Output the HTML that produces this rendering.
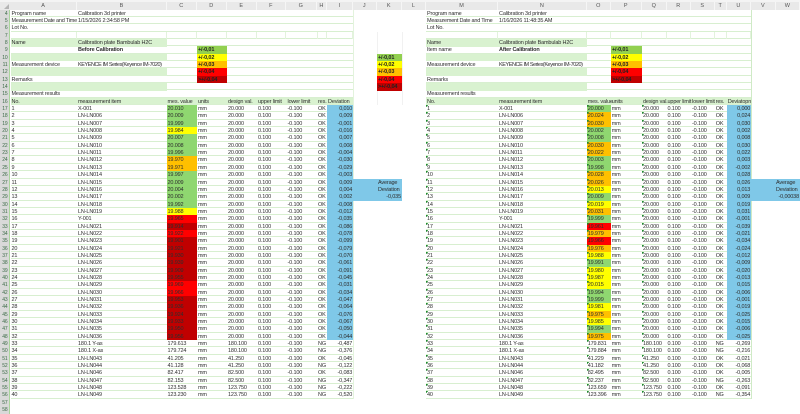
<!DOCTYPE html>
<html><head><meta charset="utf-8"><style>
html,body{margin:0;padding:0;background:#fff}
#p{position:relative;width:800px;height:414px;overflow:hidden;background:#fff;font:5.5px/9.4px "Liberation Sans",sans-serif;letter-spacing:-.15px;color:#2e2e2e}
#top{position:absolute;left:0;top:0;width:800px;height:9.6px;background:#e9e9e9;border-top:2px solid #f4f4f4;box-sizing:border-box}
#top b{position:absolute;top:0;height:7.6px;font-weight:normal;text-align:center;border-right:1px solid #f6f6f6;box-sizing:border-box;line-height:8px;color:#555}
#tri{position:absolute;left:4px;top:4px;width:0;height:0;border-left:5px solid transparent;border-bottom:5px solid #b5b5b5}
#n{position:absolute;left:0;top:9.6px;width:10px;height:404.4px;background:#d9d9d9;border-right:1px solid #a9d49c;box-sizing:border-box}
#n div{height:7.352px;text-align:right;padding-right:1.5px;color:#3d6b48;font-size:5px}
.t{position:absolute;top:9.6px}
.L{left:10.5px;width:342.5px;border-right:1px solid #e3f3dd;height:389.7px}
.R{left:426px;width:325px;border-right:1px solid #cfeac6;height:389.7px;box-sizing:content-box}
.r{position:relative;height:7.352px;border-bottom:1px solid #d8efd0;box-sizing:border-box}
.r i{position:absolute;top:0;height:7.6px;font-style:normal;white-space:nowrap;padding-left:1px;box-sizing:border-box}
.s i{background:#d9f2d0}
.h{background:#d9f2d0}
.v i{border-right:1px solid #e3f3dd}
.L .r i:nth-child(1){left:0;width:66.5px}
.L .r i:nth-child(2){left:66.5px;width:89.5px}
.L .r i:nth-child(3){left:156px;width:30px}
.L .r i:nth-child(4){left:186.5px;width:30px}
.L .r i:nth-child(5){left:216.5px;width:30px}
.L .r i:nth-child(6){left:246.5px;width:29px}
.L .r i:nth-child(7){left:276px;width:31px}
.L .r i:nth-child(8){left:306.5px;width:10px}
.L .r i:nth-child(9){left:316.5px;width:26px}
.R .r i:nth-child(1){left:0;width:72px}
.R .r i:nth-child(2){left:72px;width:88.7px}
.R .r i:nth-child(3){left:160.7px;width:24px}
.R .r i:nth-child(4){left:184.7px;width:31px}
.R .r i:nth-child(5){left:216px;width:24.7px}
.R .r i:nth-child(6){left:240.5px;width:24.5px}
.R .r i:nth-child(7){left:265px;width:24px}
.R .r i:nth-child(8){left:288.7px;width:12px}
.R .r i:nth-child(9){left:300.7px;width:24.3px}
.d .r i:nth-child(9){text-align:right;padding:0 .8px 0 0}
.d .r.h i:nth-child(9){text-align:left;padding-left:1px}
.R.d .r:nth-child(n+14) i:nth-child(1),.R.d .r:nth-child(n+14) i:nth-child(3),.R.d .r:nth-child(n+14) i:nth-child(5){background-image:linear-gradient(135deg,#1f8a2e 1.6px,transparent 1.7px)}
.r i.G{background-color:#8fd770}
.r i.Y{background-color:#ffff00}
.r i.O{background-color:#ffc000}
.r i.X{background-color:#ff0000}
.r i.D{background-color:#c00000}
.r i.B{background-color:#7fc8e8}
.r i.m{letter-spacing:-.22px}
.r i.k{letter-spacing:-.42px}
.lg{position:absolute;height:7.5px;font-weight:bold;padding-left:1px;box-sizing:border-box;color:#222;white-space:nowrap}
.av{position:absolute;background:#7fc8e8;height:22.1px;top:178.7px}
.av span{position:absolute;white-space:nowrap}
.fl{position:absolute;top:31.7px;height:73px;width:1px;background:#f1f1f1}
</style></head><body><div id="p">
<div id="top">
<b style="left:10px;width:67px">A</b><b style="left:77px;width:89.7px">B</b><b style="left:166.7px;width:30px">C</b><b style="left:196.7px;width:30px">D</b><b style="left:226.7px;width:30px">E</b><b style="left:256.7px;width:29px">F</b><b style="left:285.7px;width:31px">G</b><b style="left:316.7px;width:10.3px">H</b><b style="left:327px;width:25.7px">I</b><b style="left:352.7px;width:24px">J</b><b style="left:376.7px;width:25px">K</b><b style="left:401.7px;width:24.3px">L</b><b style="left:426px;width:72px">M</b><b style="left:498px;width:88.7px">N</b><b style="left:586.7px;width:24px">O</b><b style="left:610.7px;width:31px">P</b><b style="left:641.7px;width:25px">Q</b><b style="left:666.7px;width:24px">R</b><b style="left:690.7px;width:24px">S</b><b style="left:714.5px;width:12.2px">T</b><b style="left:726.7px;width:24.3px">U</b><b style="left:751px;width:24.5px">V</b><b style="left:775.5px;width:24.5px">W</b>
</div><div id="tri"></div>
<div id="n"><div>4</div><div>5</div><div>6</div><div>7</div><div>8</div><div>9</div><div>10</div><div>11</div><div>12</div><div>13</div><div>14</div><div>15</div><div>16</div><div>17</div><div>18</div><div>19</div><div>20</div><div>21</div><div>22</div><div>23</div><div>24</div><div>25</div><div>26</div><div>27</div><div>28</div><div>29</div><div>30</div><div>31</div><div>32</div><div>33</div><div>34</div><div>35</div><div>36</div><div>37</div><div>38</div><div>39</div><div>40</div><div>41</div><div>42</div><div>43</div><div>44</div><div>45</div><div>46</div><div>47</div><div>48</div><div>49</div><div>50</div><div>51</div><div>52</div><div>53</div><div>54</div><div>55</div><div>56</div><div>57</div><div>58</div></div>
<div class="fl" style="left:353px"></div><div class="fl" style="left:377px"></div><div class="fl" style="left:402px"></div>

<div class="t L d">
<div class="r"><i>Program name</i><i>Calibration 3d printer</i></div>
<div class="r"><i class="m">Measurement Date and Time</i><i>1/15/2026 2:34:58 PM</i></div>
<div class="r"><i>Lot No.</i></div>
<div class="r v"><i></i><i></i><i></i><i></i><i></i><i></i><i></i><i></i><i></i></div>
<div class="r s"><i>Name</i><i>Calibration plate Bambulab H2C</i></div>
<div class="r"><i></i><i><b>Before Calibration</b></i></div>
<div class="r s"><i></i><i></i></div>
<div class="r"><i>Measurement device</i><i class="k">KEYENCE IM Series(Keyence IM-7020)</i></div>
<div class="r s"><i></i><i></i></div>
<div class="r"><i>Remarks</i></div>
<div class="r s"><i></i><i></i></div>
<div class="r"><i>Measurement results</i></div>
<div class="r h"><i>No.</i><i>measurement item</i><i>mes. value</i><i>units</i><i>design val.</i><i>upper limit</i><i>lower limit</i><i>res.</i><i>Deviation</i></div>
<div class="r"><i>1</i><i>X-001</i><i class="G">20.010</i><i>mm</i><i>20.000</i><i>0.100</i><i>-0.100</i><i>OK</i><i class="B">0,010</i></div>
<div class="r"><i>2</i><i>LN-LN006</i><i class="G">20.009</i><i>mm</i><i>20.000</i><i>0.100</i><i>-0.100</i><i>OK</i><i class="B">0,009</i></div>
<div class="r"><i>3</i><i>LN-LN007</i><i class="G">19.999</i><i>mm</i><i>20.000</i><i>0.100</i><i>-0.100</i><i>OK</i><i class="B">-0,001</i></div>
<div class="r"><i>4</i><i>LN-LN008</i><i class="Y">19.984</i><i>mm</i><i>20.000</i><i>0.100</i><i>-0.100</i><i>OK</i><i class="B">-0,016</i></div>
<div class="r"><i>5</i><i>LN-LN009</i><i class="G">20.007</i><i>mm</i><i>20.000</i><i>0.100</i><i>-0.100</i><i>OK</i><i class="B">0,007</i></div>
<div class="r"><i>6</i><i>LN-LN010</i><i class="G">20.008</i><i>mm</i><i>20.000</i><i>0.100</i><i>-0.100</i><i>OK</i><i class="B">0,008</i></div>
<div class="r"><i>7</i><i>LN-LN011</i><i class="G">19.996</i><i>mm</i><i>20.000</i><i>0.100</i><i>-0.100</i><i>OK</i><i class="B">-0,004</i></div>
<div class="r"><i>8</i><i>LN-LN012</i><i class="O">19.970</i><i>mm</i><i>20.000</i><i>0.100</i><i>-0.100</i><i>OK</i><i class="B">-0,030</i></div>
<div class="r"><i>9</i><i>LN-LN013</i><i class="O">19.971</i><i>mm</i><i>20.000</i><i>0.100</i><i>-0.100</i><i>OK</i><i class="B">-0,029</i></div>
<div class="r"><i>10</i><i>LN-LN014</i><i class="G">19.997</i><i>mm</i><i>20.000</i><i>0.100</i><i>-0.100</i><i>OK</i><i class="B">-0,003</i></div>
<div class="r"><i>11</i><i>LN-LN015</i><i class="G">20.009</i><i>mm</i><i>20.000</i><i>0.100</i><i>-0.100</i><i>OK</i><i class="B">0,009</i></div>
<div class="r"><i>12</i><i>LN-LN016</i><i class="G">20.004</i><i>mm</i><i>20.000</i><i>0.100</i><i>-0.100</i><i>OK</i><i class="B">0,004</i></div>
<div class="r"><i>13</i><i>LN-LN017</i><i class="G">20.002</i><i>mm</i><i>20.000</i><i>0.100</i><i>-0.100</i><i>OK</i><i class="B">0,002</i></div>
<div class="r"><i>14</i><i>LN-LN018</i><i class="G">19.992</i><i>mm</i><i>20.000</i><i>0.100</i><i>-0.100</i><i>OK</i><i class="B">-0,008</i></div>
<div class="r"><i>15</i><i>LN-LN019</i><i class="Y">19.988</i><i>mm</i><i>20.000</i><i>0.100</i><i>-0.100</i><i>OK</i><i class="B">-0,012</i></div>
<div class="r"><i>16</i><i>Y-001</i><i class="X">19.965</i><i>mm</i><i>20.000</i><i>0.100</i><i>-0.100</i><i>OK</i><i class="B">-0,035</i></div>
<div class="r"><i>17</i><i>LN-LN021</i><i class="D">19.914</i><i>mm</i><i>20.000</i><i>0.100</i><i>-0.100</i><i>OK</i><i class="B">-0,086</i></div>
<div class="r"><i>18</i><i>LN-LN022</i><i class="X">19.922</i><i>mm</i><i>20.000</i><i>0.100</i><i>-0.100</i><i>OK</i><i class="B">-0,078</i></div>
<div class="r"><i>19</i><i>LN-LN023</i><i class="D">19.901</i><i>mm</i><i>20.000</i><i>0.100</i><i>-0.100</i><i>OK</i><i class="B">-0,099</i></div>
<div class="r"><i>20</i><i>LN-LN024</i><i class="D">19.921</i><i>mm</i><i>20.000</i><i>0.100</i><i>-0.100</i><i>OK</i><i class="B">-0,079</i></div>
<div class="r"><i>21</i><i>LN-LN025</i><i class="D">19.930</i><i>mm</i><i>20.000</i><i>0.100</i><i>-0.100</i><i>OK</i><i class="B">-0,070</i></div>
<div class="r"><i>22</i><i>LN-LN026</i><i class="D">19.939</i><i>mm</i><i>20.000</i><i>0.100</i><i>-0.100</i><i>OK</i><i class="B">-0,061</i></div>
<div class="r"><i>23</i><i>LN-LN027</i><i class="D">19.909</i><i>mm</i><i>20.000</i><i>0.100</i><i>-0.100</i><i>OK</i><i class="B">-0,091</i></div>
<div class="r"><i>24</i><i>LN-LN028</i><i class="D">19.955</i><i>mm</i><i>20.000</i><i>0.100</i><i>-0.100</i><i>OK</i><i class="B">-0,045</i></div>
<div class="r"><i>25</i><i>LN-LN029</i><i class="X">19.969</i><i>mm</i><i>20.000</i><i>0.100</i><i>-0.100</i><i>OK</i><i class="B">-0,031</i></div>
<div class="r"><i>26</i><i>LN-LN030</i><i class="X">19.966</i><i>mm</i><i>20.000</i><i>0.100</i><i>-0.100</i><i>OK</i><i class="B">-0,034</i></div>
<div class="r"><i>27</i><i>LN-LN031</i><i class="D">19.953</i><i>mm</i><i>20.000</i><i>0.100</i><i>-0.100</i><i>OK</i><i class="B">-0,047</i></div>
<div class="r"><i>28</i><i>LN-LN032</i><i class="D">19.936</i><i>mm</i><i>20.000</i><i>0.100</i><i>-0.100</i><i>OK</i><i class="B">-0,064</i></div>
<div class="r"><i>29</i><i>LN-LN033</i><i class="D">19.924</i><i>mm</i><i>20.000</i><i>0.100</i><i>-0.100</i><i>OK</i><i class="B">-0,076</i></div>
<div class="r"><i>30</i><i>LN-LN034</i><i class="D">19.933</i><i>mm</i><i>20.000</i><i>0.100</i><i>-0.100</i><i>OK</i><i class="B">-0,067</i></div>
<div class="r"><i>31</i><i>LN-LN035</i><i class="D">19.950</i><i>mm</i><i>20.000</i><i>0.100</i><i>-0.100</i><i>OK</i><i class="B">-0,050</i></div>
<div class="r"><i>32</i><i>LN-LN036</i><i class="D">19.956</i><i>mm</i><i>20.000</i><i>0.100</i><i>-0.100</i><i>OK</i><i class="B">-0,044</i></div>
<div class="r"><i>33</i><i>180.1 Y-as</i><i>179.613</i><i>mm</i><i>180.100</i><i>0.100</i><i>-0.100</i><i>NG</i><i>-0,487</i></div>
<div class="r"><i>34</i><i>180.1 X-as</i><i>179.724</i><i>mm</i><i>180.100</i><i>0.100</i><i>-0.100</i><i>NG</i><i>-0,376</i></div>
<div class="r"><i>35</i><i>LN-LN043</i><i>41.205</i><i>mm</i><i>41.250</i><i>0.100</i><i>-0.100</i><i>OK</i><i>-0,045</i></div>
<div class="r"><i>36</i><i>LN-LN044</i><i>41.128</i><i>mm</i><i>41.250</i><i>0.100</i><i>-0.100</i><i>NG</i><i>-0,122</i></div>
<div class="r"><i>37</i><i>LN-LN046</i><i>82.417</i><i>mm</i><i>82.500</i><i>0.100</i><i>-0.100</i><i>OK</i><i>-0,083</i></div>
<div class="r"><i>38</i><i>LN-LN047</i><i>82.153</i><i>mm</i><i>82.500</i><i>0.100</i><i>-0.100</i><i>NG</i><i>-0,347</i></div>
<div class="r"><i>39</i><i>LN-LN048</i><i>123.528</i><i>mm</i><i>123.750</i><i>0.100</i><i>-0.100</i><i>NG</i><i>-0,222</i></div>
<div class="r"><i>40</i><i>LN-LN049</i><i>123.230</i><i>mm</i><i>123.750</i><i>0.100</i><i>-0.100</i><i>NG</i><i>-0,520</i></div>
</div>

<div class="t R d">
<div class="r"><i>Program name</i><i>Calibration 3d printer</i></div>
<div class="r"><i class="m">Measurement Date and Time</i><i>1/16/2026 11:48:35 AM</i></div>
<div class="r"><i>Lot No.</i></div>
<div class="r v"><i></i><i></i><i></i><i></i><i></i><i></i><i></i><i></i><i></i></div>
<div class="r s"><i>Name</i><i>Calibration plate Bambulab H2C</i></div>
<div class="r"><i>Item name</i><i><b>After Calibration</b></i></div>
<div class="r s"><i></i><i></i></div>
<div class="r"><i>Measurement device</i><i class="k">KEYENCE IM Series(Keyence IM-7020)</i></div>
<div class="r s"><i></i><i></i></div>
<div class="r"><i>Remarks</i></div>
<div class="r s"><i></i><i></i></div>
<div class="r"><i>Measurement results</i></div>
<div class="r h"><i>No.</i><i>measurement item</i><i>mes. value</i><i>units</i><i>design val.</i><i>upper limit</i><i>lower limit</i><i>res.</i><i>Deviatopn</i></div>
<div class="r"><i>1</i><i>X-001</i><i class="G">20.000</i><i>mm</i><i>20.000</i><i>0.100</i><i>-0.100</i><i>OK</i><i class="B">0,000</i></div>
<div class="r"><i>2</i><i>LN-LN006</i><i class="O">20.024</i><i>mm</i><i>20.000</i><i>0.100</i><i>-0.100</i><i>OK</i><i class="B">0,024</i></div>
<div class="r"><i>3</i><i>LN-LN007</i><i class="O">20.030</i><i>mm</i><i>20.000</i><i>0.100</i><i>-0.100</i><i>OK</i><i class="B">0,030</i></div>
<div class="r"><i>4</i><i>LN-LN008</i><i class="G">20.002</i><i>mm</i><i>20.000</i><i>0.100</i><i>-0.100</i><i>OK</i><i class="B">0,002</i></div>
<div class="r"><i>5</i><i>LN-LN009</i><i class="G">20.008</i><i>mm</i><i>20.000</i><i>0.100</i><i>-0.100</i><i>OK</i><i class="B">0,008</i></div>
<div class="r"><i>6</i><i>LN-LN010</i><i class="O">20.030</i><i>mm</i><i>20.000</i><i>0.100</i><i>-0.100</i><i>OK</i><i class="B">0,030</i></div>
<div class="r"><i>7</i><i>LN-LN011</i><i class="O">20.022</i><i>mm</i><i>20.000</i><i>0.100</i><i>-0.100</i><i>OK</i><i class="B">0,022</i></div>
<div class="r"><i>8</i><i>LN-LN012</i><i class="G">20.003</i><i>mm</i><i>20.000</i><i>0.100</i><i>-0.100</i><i>OK</i><i class="B">0,003</i></div>
<div class="r"><i>9</i><i>LN-LN013</i><i class="G">19.998</i><i>mm</i><i>20.000</i><i>0.100</i><i>-0.100</i><i>OK</i><i class="B">-0,002</i></div>
<div class="r"><i>10</i><i>LN-LN014</i><i class="O">20.028</i><i>mm</i><i>20.000</i><i>0.100</i><i>-0.100</i><i>OK</i><i class="B">0,028</i></div>
<div class="r"><i>11</i><i>LN-LN015</i><i class="O">20.026</i><i>mm</i><i>20.000</i><i>0.100</i><i>-0.100</i><i>OK</i><i class="B">0,026</i></div>
<div class="r"><i>12</i><i>LN-LN016</i><i class="Y">20.013</i><i>mm</i><i>20.000</i><i>0.100</i><i>-0.100</i><i>OK</i><i class="B">0,013</i></div>
<div class="r"><i>13</i><i>LN-LN017</i><i class="G">20.009</i><i>mm</i><i>20.000</i><i>0.100</i><i>-0.100</i><i>OK</i><i class="B">0,009</i></div>
<div class="r"><i>14</i><i>LN-LN018</i><i class="Y">20.019</i><i>mm</i><i>20.000</i><i>0.100</i><i>-0.100</i><i>OK</i><i class="B">0,019</i></div>
<div class="r"><i>15</i><i>LN-LN019</i><i class="O">20.031</i><i>mm</i><i>20.000</i><i>0.100</i><i>-0.100</i><i>OK</i><i class="B">0,031</i></div>
<div class="r"><i>16</i><i>Y-001</i><i class="G">19.999</i><i>mm</i><i>20.000</i><i>0.100</i><i>-0.100</i><i>OK</i><i class="B">-0,001</i></div>
<div class="r"><i>17</i><i>LN-LN021</i><i class="X">19.961</i><i>mm</i><i>20.000</i><i>0.100</i><i>-0.100</i><i>OK</i><i class="B">-0,039</i></div>
<div class="r"><i>18</i><i>LN-LN022</i><i class="O">19.979</i><i>mm</i><i>20.000</i><i>0.100</i><i>-0.100</i><i>OK</i><i class="B">-0,021</i></div>
<div class="r"><i>19</i><i>LN-LN023</i><i class="X">19.966</i><i>mm</i><i>20.000</i><i>0.100</i><i>-0.100</i><i>OK</i><i class="B">-0,034</i></div>
<div class="r"><i>20</i><i>LN-LN024</i><i class="O">19.976</i><i>mm</i><i>20.000</i><i>0.100</i><i>-0.100</i><i>OK</i><i class="B">-0,024</i></div>
<div class="r"><i>21</i><i>LN-LN025</i><i class="Y">19.988</i><i>mm</i><i>20.000</i><i>0.100</i><i>-0.100</i><i>OK</i><i class="B">-0,012</i></div>
<div class="r"><i>22</i><i>LN-LN026</i><i class="G">19.991</i><i>mm</i><i>20.000</i><i>0.100</i><i>-0.100</i><i>OK</i><i class="B">-0,009</i></div>
<div class="r"><i>23</i><i>LN-LN027</i><i class="Y">19.980</i><i>mm</i><i>20.000</i><i>0.100</i><i>-0.100</i><i>OK</i><i class="B">-0,020</i></div>
<div class="r"><i>24</i><i>LN-LN028</i><i class="Y">19.987</i><i>mm</i><i>20.000</i><i>0.100</i><i>-0.100</i><i>OK</i><i class="B">-0,013</i></div>
<div class="r"><i>25</i><i>LN-LN029</i><i class="Y">20.015</i><i>mm</i><i>20.000</i><i>0.100</i><i>-0.100</i><i>OK</i><i class="B">0,015</i></div>
<div class="r"><i>26</i><i>LN-LN030</i><i class="G">19.994</i><i>mm</i><i>20.000</i><i>0.100</i><i>-0.100</i><i>OK</i><i class="B">-0,006</i></div>
<div class="r"><i>27</i><i>LN-LN031</i><i class="G">19.999</i><i>mm</i><i>20.000</i><i>0.100</i><i>-0.100</i><i>OK</i><i class="B">-0,001</i></div>
<div class="r"><i>28</i><i>LN-LN032</i><i class="Y">19.981</i><i>mm</i><i>20.000</i><i>0.100</i><i>-0.100</i><i>OK</i><i class="B">-0,019</i></div>
<div class="r"><i>29</i><i>LN-LN033</i><i class="O">19.975</i><i>mm</i><i>20.000</i><i>0.100</i><i>-0.100</i><i>OK</i><i class="B">-0,025</i></div>
<div class="r"><i>30</i><i>LN-LN034</i><i class="Y">19.985</i><i>mm</i><i>20.000</i><i>0.100</i><i>-0.100</i><i>OK</i><i class="B">-0,015</i></div>
<div class="r"><i>31</i><i>LN-LN035</i><i class="G">19.994</i><i>mm</i><i>20.000</i><i>0.100</i><i>-0.100</i><i>OK</i><i class="B">-0,006</i></div>
<div class="r"><i>32</i><i>LN-LN036</i><i class="O">19.975</i><i>mm</i><i>20.000</i><i>0.100</i><i>-0.100</i><i>OK</i><i class="B">-0,025</i></div>
<div class="r"><i>33</i><i>180.1 Y-as</i><i>179.831</i><i>mm</i><i>180.100</i><i>0.100</i><i>-0.100</i><i>NG</i><i>-0,269</i></div>
<div class="r"><i>34</i><i>180.1 X-as</i><i>179.884</i><i>mm</i><i>180.100</i><i>0.100</i><i>-0.100</i><i>NG</i><i>-0,216</i></div>
<div class="r"><i>35</i><i>LN-LN043</i><i>41.229</i><i>mm</i><i>41.250</i><i>0.100</i><i>-0.100</i><i>OK</i><i>-0,021</i></div>
<div class="r"><i>36</i><i>LN-LN044</i><i>41.182</i><i>mm</i><i>41.250</i><i>0.100</i><i>-0.100</i><i>OK</i><i>-0,068</i></div>
<div class="r"><i>37</i><i>LN-LN046</i><i>82.495</i><i>mm</i><i>82.500</i><i>0.100</i><i>-0.100</i><i>OK</i><i>-0,005</i></div>
<div class="r"><i>38</i><i>LN-LN047</i><i>82.237</i><i>mm</i><i>82.500</i><i>0.100</i><i>-0.100</i><i>NG</i><i>-0,263</i></div>
<div class="r"><i>39</i><i>LN-LN048</i><i>123.659</i><i>mm</i><i>123.750</i><i>0.100</i><i>-0.100</i><i>OK</i><i>-0,091</i></div>
<div class="r"><i>40</i><i>LN-LN049</i><i>123.396</i><i>mm</i><i>123.750</i><i>0.100</i><i>-0.100</i><i>NG</i><i>-0,354</i></div>
</div>

<div class="lg" style="left:197px;top:46.4px;width:30px;background:#92d050">+/-0,01</div>
<div class="lg" style="left:197px;top:53.75px;width:30px;background:#ffff00">+/-0,02</div>
<div class="lg" style="left:197px;top:61.1px;width:30px;background:#ffc000">+/-0,03</div>
<div class="lg" style="left:197px;top:68.45px;width:30px;background:#ff0000">+/-0,04</div>
<div class="lg" style="left:197px;top:75.8px;width:30px;background:#c00000">&gt;+/-0,04</div>

<div class="lg" style="left:377px;top:53.75px;width:25px;background:#92d050">+/-0,01</div>
<div class="lg" style="left:377px;top:61.1px;width:25px;background:#ffff00">+/-0,02</div>
<div class="lg" style="left:377px;top:68.45px;width:25px;background:#ffc000">+/-0,03</div>
<div class="lg" style="left:377px;top:75.8px;width:25px;background:#ff0000">+/-0,04</div>
<div class="lg" style="left:377px;top:83.15px;width:25px;background:#c00000">&gt;+/-0,04</div>

<div class="lg" style="left:611px;top:46.4px;width:31px;background:#92d050">+/-0,01</div>
<div class="lg" style="left:611px;top:53.75px;width:31px;background:#ffff00">+/-0,02</div>
<div class="lg" style="left:611px;top:61.1px;width:31px;background:#ffc000">+/-0,03</div>
<div class="lg" style="left:611px;top:68.45px;width:31px;background:#ff0000">+/-0,04</div>
<div class="lg" style="left:611px;top:75.8px;width:31px;background:#c00000">&gt;+/-0,04</div>

<div class="av" style="left:353px;width:49px"><span style="left:25px;top:0">Average</span><span style="left:25px;top:7.35px">Deviation</span><span style="right:1px;top:14.7px">-0,035</span></div>
<div class="av" style="left:751px;width:49px"><span style="left:25px;top:0">Average</span><span style="left:25px;top:7.35px">Deviation</span><span style="right:1px;top:14.7px">-0,00038</span></div>
</div></body></html>
